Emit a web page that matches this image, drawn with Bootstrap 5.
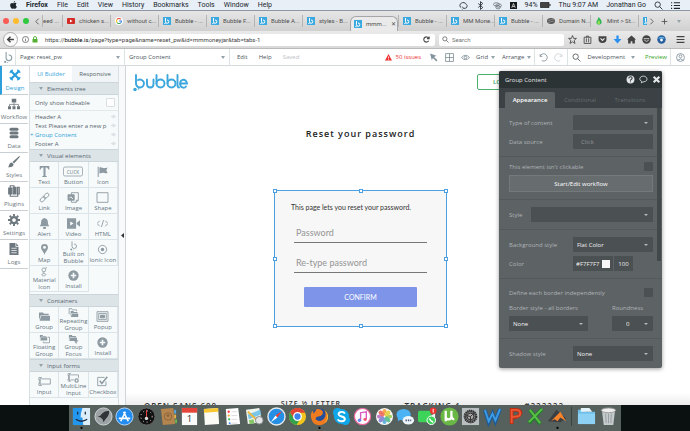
<!DOCTYPE html>
<html lang="en">
<head>
<meta charset="utf-8">
<meta name="viewport" content="width=device-width, initial-scale=1">
<title>Bubble editor</title>
<link href="https://cdn.jsdelivr.net/npm/bootstrap@5.3.0/dist/css/bootstrap.min.css" rel="stylesheet">
<style>
body{font:6px/8px "Open Sans",sans-serif;color:#56646c;background:#fff}
svg{display:block;flex:none}
button,input,select{font:inherit;color:inherit}
button{border:0;background:none;padding:0}
a{color:inherit;text-decoration:none}
.ic{width:9px;height:9px;fill:none;stroke:currentColor;stroke-width:1.5}
.mini{width:7px;height:7px}
.dim{width:5px;height:5px;color:#c0cacf}
.solid{fill:currentColor;stroke:none}
/* system menu bar */
.sysbar{height:11px;background:#e9eff7;border-bottom:1px solid #8b98a3;font:7px/10px Roboto,sans-serif;color:#20262c;padding:0 10px}
.menus{gap:9px}
/* browser chrome */
.tabstrip{height:20px;background:linear-gradient(#e6e6e6,#d0d0d0);padding:0 0 0 3px;font:6px/8px Roboto,sans-serif;color:#4e4e4e}
.light{width:6px;height:6px;border-radius:50%}
.btab{width:48px;height:12px;padding-left:4px;gap:4px;border-left:1px solid #b4b4b4;white-space:nowrap}
.btab.on{height:15px;background:#eaeaea;border:1px solid #a6a6a6;border-bottom:0;border-radius:6px 6px 0 0;align-self:flex-end;padding-left:3px;padding-right:4px}
.btab svg{width:8px;height:8px}
.urlrow{height:18px;background:linear-gradient(#eaeaea,#d9d9d9);border-bottom:1px solid #bbb;padding:0 5px 0 3px;color:#444;font-family:Roboto,sans-serif}
.back{width:15px;height:15px;border-radius:50%;background:#fbfbfb;border:1px solid #aaa;z-index:1;margin-right:-6px}
.field{height:12px;background:#fff;border-radius:2px;padding:0 5px 0 10px}
.search{width:125px;padding-left:3px}
.field input{border:0;outline:0;background:none;padding:0;min-width:0;width:100%;color:#666}
/* editor toolbar */
.apptool{height:17px;border-bottom:1px solid #d5dadd;color:#4c565c}
.cell{border-right:1px solid #dde2e4;height:100%}
.caret{width:0;height:0;border:2px solid transparent;border-top:3px solid #95a2aa;border-bottom:0}
/* side navigation */
.side{width:29px}
.side button{height:29px;width:28px;border-bottom:1px solid #c9cfd3;color:#6d777e;gap:3px}
.side svg{width:12px;height:12px}
.side .on{color:#2b9fdc;border-left:2px solid #2b9fdc}
.palette{width:90px;background:#f6fafb;border:solid #d7dfe3;border-width:0 1px}
.ptabs button{height:16px;background:#f1f5f7;padding-bottom:1px}
.ptabs .on{background:#fff;color:#39a4dc}
.sec{height:13px;background:#dde4e8;border:solid #ccd5da;border-width:1px 0;padding-left:9px;gap:4px;color:#56666f}
.hide{height:16px;padding:0 3px 0 5px;border-bottom:1px solid #e2e9ec}
.treebox{padding:1px 0}
.tree{height:9px;padding:0 2px 0 5px}
.cells{display:grid;grid-template-columns:repeat(3,1fr)}
.cells button{height:26px;border:solid #dbe4e8;border-width:0 1px 1px 0;line-height:7px;color:#65757f;padding-bottom:1px}
.cells svg{width:11px;height:11px;color:#8e9aa1;stroke-width:1.3;margin-bottom:2px}
.cells .two svg{margin-bottom:0;height:10px}
.cells .two{padding-bottom:0}
.cells .wide{width:13px}
.tick{appearance:none;width:9px;height:9px;background:#fff;border:1px solid #d8e0e4;border-radius:1px;margin:0}
.gutter{width:7px;background:#f8f9fa;border-right:1px solid #cfd5d8}
/* page being edited */
.sheet{padding-right:95px}
.login{height:16px;width:80px;border:1px solid #4db070;border-radius:2px;color:#36a05c;font-weight:600;padding-left:15px}
.ttl{font:600 9px/12px "Open Sans",sans-serif;letter-spacing:1px;color:#222;margin:35px 0 50px}
.grp{width:173px;height:137px;border:1px solid #4c9fe0;background:#f7f7f7;padding:12px 18px 0;font:7px/8px Lato,sans-serif;color:#333}
.grp p{margin:0 0 12px -4px}
.grp input{border:0;border-bottom:1px solid #777;background:none;font-size:9px;line-height:12px;height:20px;padding:0 2px;border-radius:0;width:133px;margin-bottom:10px}
.grp input::placeholder{color:#949494}
.confirm{width:113px;height:20px;background:#7d94e8;color:#fff;border-radius:1px;margin-top:4px}
.hd{width:4px;height:4px;border:1px solid #4c9fe0;background:#fff;position:absolute;transform:translate(-50%,-50%)}
.specs{font:600 8px/8px "Open Sans",sans-serif;letter-spacing:1px;color:#333;height:12px;padding:7px 0 0 18px;margin-right:-95px;padding-right:126px;white-space:nowrap;background:linear-gradient(#fff,#ececec)}
.specs span{padding-top:2px}
.specs .high{font-size:7px;padding:0}
/* property editor */
.prop{right:28px;top:5px;width:163px;background:#5d6265;border-radius:2px;box-shadow:0 1px 4px #0006;color:#aeb3b5}
.phead{height:17px;background:#2c3335;border-radius:2px 2px 0 0;color:#e3e6e7;padding:0 1px 0 6px}
.ptab{height:20px;background:#3b4144;padding-left:6px}
.ptab button{height:16px;width:50px;color:#666d70}
.ptab .on{background:#5d6265;color:#fff;font-weight:600;border-radius:2px 2px 0 0}
.prow{padding:7px 9px 7px 10px;border-bottom:1px solid #54595c;gap:4px}
.inp{height:15px;background:#4b5053;border:0;border-radius:0;padding:0 8px;color:#f1f1f1;width:80px}
.inp::placeholder{color:#8f9497}
select.inp{appearance:none;padding-left:4px;background:#4b5053 url("data:image/svg+xml,%3Csvg xmlns='http://www.w3.org/2000/svg' viewBox='0 0 4 2'%3E%3Cpath d='M0 0h4L2 2z' fill='%23b6babb'/%3E%3C/svg%3E") no-repeat right 5px center/4px 2px}
.hexbox{width:40px;background:#4b5053}
.hexbox .inp{width:29px;padding:0 0 0 3px}
.swatch{width:8px;height:8px;background:#f7f7f7}
.flow{height:17px;background:#676c6f;border:1px solid #74797b;color:#fff}
.prop .tick{background:#4b5053;border-color:#4b5053}
.thumb{right:1px;top:37px;width:4px;height:153px;background:#43484b}
/* dock */
.desk{height:26px;background:#0b1110}
.dock{width:80%;background:#56605d;padding:2px 3px 5px}
.dock svg{width:19px;height:19px;overflow:visible}
.dsep{width:1px;height:19px;background:#3b4341;margin:0 2px}
</style>
<script src="https://cdn.jsdelivr.net/npm/bootstrap@5.3.0/dist/js/bootstrap.bundle.min.js"></script>
</head>
<body class="vh-100 d-flex flex-column overflow-hidden">
<svg width="0" height="0" class="position-absolute">
<symbol id="bub" viewBox="0 0 16 16"><path d="M0 0h16v16H0z" fill="#3aa9e0"/><path d="M5 2v7a3.3 3.3 0 1 0 3-3" fill="none" stroke="#fff" stroke-width="2"/><circle cx="4" cy="13" r="1.3" fill="#fff"/></symbol>
<symbol id="bmark" viewBox="0 0 16 20"><path d="M5 1v10a4.5 4.5 0 1 0 4-5" fill="none" stroke="currentColor" stroke-width="1.8"/><circle cx="3.5" cy="17" r="1.8" fill="currentColor"/><circle cx="7.5" cy="18" r=".9" fill="currentColor"/></symbol>
<symbol id="mag" viewBox="0 0 16 16"><circle cx="6.5" cy="6.5" r="4.8"/><path d="M10 10l5 5"/></symbol>
<symbol id="eye" viewBox="0 0 16 16"><path d="M1 8q7-8 14 0q-7 8-14 0z"/><circle cx="8" cy="8" r="2.3"/></symbol>
<symbol id="plus" viewBox="0 0 16 16"><circle cx="8" cy="8" r="7.5" fill="currentColor" stroke="none"/><path d="M8 4v8M4 8h8" stroke="#f6fafb" stroke-width="2.4"/></symbol>
<symbol id="folder" viewBox="0 0 16 16"><path d="M0 2h6l1 2h7v2H2.500L0 13z" fill="currentColor" stroke="none"/><path d="M1 14L3 7h13v7z" fill="currentColor" stroke="none"/></symbol>
</svg>

<header>
<div class="sysbar d-flex align-items-center justify-content-between">
 <nav class="menus d-flex align-items-center">
  <svg class="solid" width="7" height="8" viewBox="0 0 14 16"><path d="M10 0c0 2-1.500 3.500-3 3.500C7 2 8 .5 10 0zM7.300 4.500C8 4.500 9 3.700 10.300 3.700c1 0 2.200.6 2.900 1.500-2.500 1.600-2 5 .5 6-.6 1.700-2 4.300-3.500 4.300-1 0-1.400-.7-2.700-.7s-1.700.7-2.700.7C2.500 15.500.300 11.500.300 8.500c0-3 1.900-4.700 3.800-4.700 1.300 0 2.300.7 3.200.7z"/></svg>
  <a href="#" class="fw-bold">Firefox</a><a href="#">File</a><a href="#">Edit</a><a href="#">View</a><a href="#">History</a><a href="#">Bookmarks</a><a href="#">Tools</a><a href="#">Window</a><a href="#">Help</a>
 </nav>
 <div class="d-flex align-items-center gap-2">
  <svg class="ic" viewBox="0 0 16 16"><path d="M4 12a4.500 4.500 0 0 1 0-8 6 6 0 0 1 9 2 4 4 0 0 1-2 7H9M6 10l2 3-2 2"/></svg>
  <svg class="ic" viewBox="0 0 16 16"><path d="M4 4.500l8 7L8 15V1l4 3.500-8 7"/></svg>
  <svg class="ic" viewBox="0 0 16 16" opacity=".6"><ellipse cx="6" cy="6" rx="5" ry="3"/><ellipse cx="10" cy="8" rx="5" ry="3"/><ellipse cx="9" cy="11" rx="4" ry="3"/></svg>
  <svg width="7" height="7" viewBox="0 0 14 14"><path d="M0 0h14v14H0z" fill="#16191c"/><path d="M3.500 11.500L7 3l3.500 8.500M5 9h4" fill="none" stroke="#fff" stroke-width="1.400"/></svg>
  <div class="d-flex align-items-center" style="gap:2px">94%<svg width="11" height="6" viewBox="0 0 22 12"><path d="M1 1h17v10H1z" fill="#444" stroke="#222" stroke-width="1.500"/><path d="M20 4v4" stroke="#222" stroke-width="2"/></svg></div>
  <span>Thu 9:07 AM</span><span>Jonathan Go</span>
  <svg class="ic" viewBox="0 0 16 16"><use href="#mag"/></svg>
  <svg class="ic" viewBox="0 0 16 16"><path d="M5 3h11M5 8h11M5 13h11M0 3h2M0 8h2M0 13h2" stroke-width="2"/></svg>
 </div>
</div>

<div class="tabstrip d-flex align-items-center overflow-hidden">
 <div class="d-flex" style="gap:4px"><span class="light" style="background:#f95c54"></span><span class="light" style="background:#fdbc30"></span><span class="light" style="background:#30c83f"></span></div>
 <svg class="ic ms-1 flex-shrink-0" viewBox="0 0 16 16"><path d="M10 3L5 8l5 5"/></svg>
 <div class="d-flex flex-grow-1 overflow-hidden h-100 align-items-center">
  <div class="btab d-flex align-items-center flex-shrink-0 ps-0" style="width:20px">eed ...</div>
  <div class="btab d-flex align-items-center flex-shrink-0"><svg viewBox="0 0 16 16"><rect y="2" width="16" height="12" rx="2" fill="#d32b26"/><path d="M6 5v6l5-3z" fill="#fff"/></svg>chicken s...</div>
  <div class="btab d-flex align-items-center flex-shrink-0"><svg viewBox="0 0 16 16"><circle cx="8" cy="8" r="8" fill="#fff"/><g fill="none" stroke-width="2.200"><path d="M11.500 4.500A5 5 0 0 0 4 5" stroke="#e94335"/><path d="M4 5a5 5 0 0 0 0 6" stroke="#fbbc05"/><path d="M4 11a5 5 0 0 0 7 1" stroke="#34a853"/><path d="M11 12a5 5 0 0 0 2-4H8" stroke="#4285f4"/></g></svg>without c...</div>
  <div class="btab d-flex align-items-center flex-shrink-0"><svg><use href="#bub"/></svg>Bubble - ...</div>
  <div class="btab d-flex align-items-center flex-shrink-0"><svg><use href="#bub"/></svg>Bubble F...</div>
  <div class="btab d-flex align-items-center flex-shrink-0"><svg><use href="#bub"/></svg>Bubble A...</div>
  <div class="btab d-flex align-items-center flex-shrink-0"><svg><use href="#bub"/></svg>styles - B...</div>
  <div class="btab on d-flex align-items-center flex-shrink-0"><svg><use href="#bub"/></svg>mmm...<button class="ms-auto" aria-label="Close tab">✕</button></div>
  <div class="btab d-flex align-items-center flex-shrink-0"><svg><use href="#bub"/></svg>Bubble - ...</div>
  <div class="btab d-flex align-items-center flex-shrink-0"><svg><use href="#bub"/></svg>MM Mone...</div>
  <div class="btab d-flex align-items-center flex-shrink-0"><svg><use href="#bub"/></svg>Bubble - ...</div>
  <div class="btab d-flex align-items-center flex-shrink-0"><svg viewBox="0 0 16 16"><ellipse cx="8" cy="8" rx="8" ry="6" fill="#555"/><path d="M2 7l12-3M2 11l12-3" stroke="#bbb"/></svg>Domain N...</div>
  <div class="btab d-flex align-items-center flex-shrink-0"><svg viewBox="0 0 16 16"><path d="M7 0c6 6 7 9 6 12-2 4-9 4-10 0C2 8 6 6 7 0z" fill="#2fb457"/><path d="M8 6c-5 5-4 8 0 9 3-2 3-5 0-9z" fill="#8fe04f"/></svg>Mint &gt; St...</div>
  <div class="btab d-flex align-items-center flex-shrink-0"><svg><use href="#bub"/></svg></div>
 </div>
 <div class="d-flex align-items-center flex-shrink-0" style="gap:4px;width:43px">
  <svg class="ic" viewBox="0 0 16 16"><path d="M6 3l5 5-5 5"/></svg><svg class="ic" viewBox="0 0 16 16"><path d="M8 3v10M3 8h10"/></svg><span class="caret ms-1"></span>
 </div>
</div>

<div class="urlrow d-flex align-items-center">
 <button class="back d-flex align-items-center justify-content-center flex-shrink-0" aria-label="Back"><svg class="ic" viewBox="0 0 16 16"><path d="M14 8H3M8 3L3 8l5 5" stroke-width="2.600"/></svg></button>
 <div class="field d-flex align-items-center flex-grow-1" style="gap:3px">
  <svg class="ic mini" viewBox="0 0 16 16"><circle cx="8" cy="8" r="7"/><path d="M8 7v5M8 4v1.500"/></svg>
  <svg width="6" height="7" viewBox="0 0 12 14"><path d="M1 6h10v7H1z" fill="#53b033"/><path d="M3 6V4a3 3 0 0 1 6 0v2" fill="none" stroke="#53b033" stroke-width="1.800"/></svg>
  <div class="ps-1 flex-grow-1 text-nowrap">https://<span class="text-black">bubble.is</span>/page?type=page&amp;name=reset_pw&amp;id=mmmoneyjar&amp;tab=tabs-1</div>
  <svg class="ic mini" viewBox="0 0 16 16"><path d="M13 11a6 6 0 1 1 0-6M14 1v5H9" stroke-width="2.500"/></svg>
 </div>
 <label class="field search d-flex align-items-center ms-1 flex-shrink-0" style="gap:3px"><svg class="ic mini" viewBox="0 0 16 16"><use href="#mag"/></svg><input aria-label="Search" placeholder="Search"></label>
 <div class="d-flex align-items-center justify-content-between flex-shrink-0" style="width:121px;padding-left:4px">
  <svg class="ic" viewBox="0 0 16 16"><path d="M8 1l2 5h5l-4 3.500 1.500 5.500L8 12l-4.500 3L5 9.500 1 6h5z"/></svg>
  <svg class="ic" viewBox="0 0 16 16"><path d="M2 4h12v11H2zM6 4V2h4v2M6 6v7M10 6v7"/></svg>
  <svg class="ic solid" viewBox="0 0 16 16"><path d="M1 2h14v6a7 6 0 0 1-14 0z"/><path d="M4.500 6L8 9.500 11.500 6" fill="none" stroke="#eee" stroke-width="2"/></svg>
  <svg class="ic solid" viewBox="0 0 16 16" color="#2b90ef"><path d="M6 1h4v6h5l-7 8-7-8h5z"/></svg>
  <svg class="ic solid" viewBox="0 0 16 16"><path d="M8 1l8 7h-2v7H9.500v-4h-3v4H2V8H0z"/></svg>
  <svg class="ic solid" viewBox="0 0 16 16"><circle cx="8" cy="8" r="7.500"/><path d="M3 6.500h10M4 9q4 5 8 0" fill="none" stroke="#ddd" stroke-width="1.500"/></svg>
  <svg class="ic solid" viewBox="0 0 16 16"><circle cx="8" cy="8" r="7.500" fill="#285f9d"/><path d="M2 6a7 5 0 0 1 12 0z" fill="#6fc3ef"/><circle cx="8" cy="9" r="2.500" fill="#fff"/></svg>
  <svg class="ic ms-1" viewBox="0 0 16 16"><path d="M1 3h14M1 8h14M1 13h14" stroke-width="2.200"/></svg>
 </div>
</div>

<div class="apptool d-flex align-items-center">
 <div class="cell d-flex align-items-center justify-content-center" style="width:16px"><svg width="10" height="13" color="#8fa0a9"><use href="#bmark"/></svg></div>
 <button class="cell d-flex align-items-center justify-content-between" style="width:109px;padding:0 4px">Page: reset_pw<span class="caret"></span></button>
 <button class="cell d-flex align-items-center justify-content-between" style="width:105px;padding:0 4px">Group Content<span class="caret"></span></button>
 <div class="d-flex me-auto" style="gap:11px;padding-left:7px"><a href="#">Edit</a><a href="#">Help</a><span style="color:#b9bfc3">Saved</span></div>
 <div class="d-flex align-items-center me-2" style="color:#ee3130;gap:3px"><svg class="solid" width="7" height="7" viewBox="0 0 14 14"><path d="M7 0l7 13H0z"/><path d="M7 5v4M7 10v1.500" stroke="#fff" stroke-width="1.500"/></svg>50 issues</div>
 <div class="d-flex align-items-center" style="color:#82919a;gap:7px">
  <svg class="ic solid" viewBox="0 0 16 16"><path d="M2 1l11 4-4 2 6 6-2 2-6-6-2 4z"/></svg>
  <svg class="ic" viewBox="0 0 16 16"><path d="M1 1h14v14H1zM8 1v14M1 8h14"/></svg>
  <svg class="ic" viewBox="0 0 16 16"><use href="#eye"/></svg>
 </div>
 <div class="cell d-flex align-items-center" style="gap:3px;padding:0 3px 0 6px"><span>Grid</span><span class="caret"></span><span class="ms-1">Arrange</span><span class="caret"></span></div>
 <div class="cell d-flex align-items-center" style="gap:6px;padding:0 4px;color:#82919a"><svg class="ic" viewBox="0 0 16 16"><path d="M2 2v4h4M2 6a6.500 6.500 0 1 1 3 7.500"/></svg><svg class="ic" opacity=".4" viewBox="0 0 16 16"><path d="M14 2v4h-4M14 6a6.500 6.500 0 1 0-3 7.500"/></svg></div>
 <div class="d-flex align-items-center" style="padding-left:4px;gap:6px"><svg class="ic" viewBox="0 0 16 16"><use href="#mag"/></svg><span>Development</span><span class="caret"></span></div>
 <a href="#" class="cell d-flex align-items-center" style="color:#38a525;padding:0 3px 0 10px">Preview</a>
 <svg class="ic" style="margin:0 5px;color:#82919a" viewBox="0 0 16 16"><circle cx="8" cy="8" r="7"/><circle cx="8" cy="6" r="2.500"/><path d="M3 13q5-5 10 0"/></svg>
</div>
</header>

<main class="d-flex flex-grow-1 overflow-hidden position-relative">
<nav class="side d-flex flex-column flex-shrink-0">
 <button class="on d-flex flex-column align-items-center justify-content-center"><svg class="ic" viewBox="0 0 16 16"><path d="M2 2l12 12M14 2L2 14" stroke-width="3"/><path d="M1 5l4-4M11 15l4-4M11 1l4 4M1 11l4 4" stroke-width="1.500"/></svg>Design</button>
 <button class="d-flex flex-column align-items-center justify-content-center"><svg class="ic" viewBox="0 0 16 16"><path d="M5 1h6v5H5zM0 11h4v4H0zM6 11h4v4H6zM12 11h4v4h-4z" fill="currentColor" stroke="none"/><path d="M8 6v5M2 11V8.500h12V11" stroke-width="1"/></svg>Workflow</button>
 <button class="d-flex flex-column align-items-center justify-content-center"><svg class="solid" viewBox="0 0 16 16"><rect x="2" y="1" width="12" height="4" rx="2"/><rect x="2" y="6" width="12" height="4" rx="2"/><rect x="2" y="11" width="12" height="4" rx="2"/></svg>Data</button>
 <button class="d-flex flex-column align-items-center justify-content-center"><svg class="solid" viewBox="0 0 16 16"><path d="M15 0l1 1-8 9-2-2zM5 8.500L7.500 11C7 15 3 15 0 15c2-2 1-6 5-6.500z"/></svg>Styles</button>
 <button class="d-flex flex-column align-items-center justify-content-center"><svg class="ic" viewBox="0 0 16 16"><path d="M1 4h4v8H1zM7 3h3v9H7z" fill="currentColor"/><path d="M3 4V1h5v2M3 12v3h10V3M12 3h3v9h-3z"/></svg>Plugins</button>
 <button class="d-flex flex-column align-items-center justify-content-center"><svg class="ic" viewBox="0 0 16 16"><circle cx="8" cy="8" r="4" stroke-width="3"/><path d="M8 0v3M8 13v3M0 8h3M13 8h3M2.300 2.300l2 2M11.700 11.700l2 2M2.300 13.700l2-2M11.700 4.300l2-2" stroke-width="2.500"/></svg>Settings</button>
 <button class="d-flex flex-column align-items-center justify-content-center"><svg class="solid" viewBox="0 0 16 16"><path d="M2 0h8v5h4v11H2zM11 0l3 4h-3z"/><path d="M4.500 7h7M4.500 10h7M4.500 13h7" stroke="#fff"/></svg>Logs</button>
</nav>

<aside class="palette flex-shrink-0 overflow-hidden">
 <div class="ptabs d-flex"><button class="on flex-fill">UI Builder</button><button class="flex-fill">Responsive</button></div>
 <div class="sec d-flex align-items-center"><span class="caret"></span>Elements tree</div>
 <label class="hide d-flex align-items-center justify-content-between">Only show hideable<input type="checkbox" class="tick"></label>
 <div class="treebox">
  <div class="tree d-flex align-items-center justify-content-between">Header A<svg class="ic dim" viewBox="0 0 16 16"><use href="#eye"/></svg></div>
  <div class="tree d-flex align-items-center justify-content-between text-nowrap">Text Please enter a new p<svg class="ic dim" viewBox="0 0 16 16"><use href="#eye"/></svg></div>
  <div class="tree d-flex align-items-center justify-content-between ps-0" style="color:#2f9fd9"><span>+ Group Content</span><svg class="ic dim" viewBox="0 0 16 16"><use href="#eye"/></svg></div>
  <div class="tree d-flex align-items-center justify-content-between">Footer A<svg class="ic dim" viewBox="0 0 16 16"><use href="#eye"/></svg></div>
 </div>
 <div class="sec d-flex align-items-center"><span class="caret"></span>Visual elements</div>
 <div class="cells" style="padding-bottom:2px">
  <button class="d-flex flex-column align-items-center justify-content-end"><svg class="solid" viewBox="0 0 16 16"><path d="M1 0h14v5h-1.500C13 2.500 12 2 9.500 2v11c0 1.500.5 2 2 2v1h-7v-1c1.500 0 2-.5 2-2V2C4 2 3 2.500 2.500 5H1z"/></svg>Text</button>
  <button class="d-flex flex-column align-items-center justify-content-end"><svg style="width:20px" viewBox="0 0 40 22"><rect x="1" y="2" width="38" height="18" rx="3" fill="none" stroke="currentColor" stroke-width="1.500"/><text x="20" y="15" font-size="9" font-weight="600" text-anchor="middle" fill="currentColor">CLICK</text></svg>Button</button>
  <button class="d-flex flex-column align-items-center justify-content-end"><svg class="solid" viewBox="0 0 16 16"><path d="M1 1h1.500v15H1zM3.500 2c4-1 5 2 8 1 1 0 2-.5 4-1l-2 4 2 4c-4 2-5-1-8 0-2 0-3 1-4 1z"/></svg>Icon</button>
  <button class="d-flex flex-column align-items-center justify-content-end"><svg class="ic" viewBox="0 0 16 16"><g transform="rotate(-45 8 8)"><rect x="0" y="5.500" width="9" height="5" rx="2.500"/><rect x="7" y="5.500" width="9" height="5" rx="2.500"/></g></svg>Link</button>
  <button class="d-flex flex-column align-items-center justify-content-end"><svg class="ic wide" viewBox="0 0 16 16"><path d="M5 4V1h10v11l-3 3H5v-3M12 15v-3h3"/><path d="M0 4h9v8H0z" fill="currentColor"/><path d="M2 9l2-2 3 3" stroke="#fff"/></svg>Image</button>
  <button class="d-flex flex-column align-items-center justify-content-end"><svg class="ic wide" viewBox="0 0 18 16"><path d="M1 1h16v14H1z"/></svg>Shape</button>
  <button class="d-flex flex-column align-items-center justify-content-end"><svg class="solid" viewBox="0 0 16 16"><path d="M8 0c4 1 5 3 5 7 0 2 .5 3 2 5H1c1.500-2 2-3 2-5 0-4 1-6 5-7zM6 13h4a2 2 0 0 1-4 2z"/></svg>Alert</button>
  <button class="d-flex flex-column align-items-center justify-content-end"><svg class="solid wide" viewBox="0 0 20 16"><path d="M0 0h14v16H0zM15 7l5-4v10l-5-4z"/><path d="M5 5v6l5-3z" fill="#fff"/></svg>Video</button>
  <button class="d-flex flex-column align-items-center justify-content-end"><svg class="ic" viewBox="0 0 16 16"><path d="M4 4L0 8l4 4M12 4l4 4-4 4M9.500 3l-3 10"/></svg>HTML</button>
  <button class="d-flex flex-column align-items-center justify-content-end"><svg class="solid" viewBox="0 0 16 16"><path d="M8 0a5 5 0 0 1 5 5c0 4-4 6-5 11C7 11 3 9 3 5a5 5 0 0 1 5-5z"/><circle cx="8" cy="5" r="2" fill="#fff"/></svg>Map</button>
  <button class="two d-flex flex-column align-items-center justify-content-end"><svg><use href="#bmark"/></svg>Built on<br>Bubble</button>
  <button class="d-flex flex-column align-items-center justify-content-end text-nowrap"><svg class="ic" viewBox="0 0 16 16"><circle cx="8" cy="8" r="6"/><circle cx="8" cy="8" r="2.500" fill="currentColor" stroke="none"/></svg>Ionic Icon</button>
  <button class="two d-flex flex-column align-items-center justify-content-end"><svg class="ic" viewBox="0 0 16 16"><circle cx="7" cy="4.500" r="3"/><path d="M9 2l3-1M6 7.500c-3 2 5 2 4 5s-8 2-6-1c1-1 3-1 4-1"/></svg>Material<br>Icon</button>
  <button class="d-flex flex-column align-items-center justify-content-end"><svg><use href="#plus"/></svg>Install</button>
 </div>
 <div class="sec d-flex align-items-center"><span class="caret"></span>Containers</div>
 <div class="cells">
  <button class="d-flex flex-column align-items-center justify-content-end"><svg class="wide"><use href="#folder"/></svg>Group</button>
  <button class="two d-flex flex-column align-items-center justify-content-end"><svg class="ic" viewBox="0 0 16 16"><path d="M1 10V1h4l1 2h7v2"/><use href="#folder" x="3" y="3" width="13" height="13"/></svg>Repeating<br>Group</button>
  <button class="d-flex flex-column align-items-center justify-content-end"><svg class="ic wide" viewBox="0 0 18 16"><path d="M1 1h16v14H1zM3.500 3.500h11v9h-11z"/><path d="M6 6h6v4H6z" fill="currentColor"/></svg>Popup</button>
  <button class="two d-flex flex-column align-items-center justify-content-end"><svg class="ic" viewBox="0 0 16 16"><use href="#folder" width="13" height="12"/><path d="M13 5h3v9H6v-2"/></svg>Floating<br>Group</button>
  <button class="two d-flex flex-column align-items-center justify-content-end"><svg class="ic" viewBox="0 0 16 16"><use href="#folder" width="14" height="13"/><path d="M8 8l6 3-3 1 2 3" stroke-width="2"/></svg>Group<br>Focus</button>
  <button class="d-flex flex-column align-items-center justify-content-end"><svg><use href="#plus"/></svg>Install</button>
 </div>
 <div class="sec d-flex align-items-center"><span class="caret"></span>Input forms</div>
 <div class="cells">
  <button class="d-flex flex-column align-items-center justify-content-end"><svg class="ic wide" viewBox="0 0 20 16"><path d="M5 4h14v8H5M0 4h2v8H0M1 2h5M3.500 2v12M1 14h5"/></svg>Input</button>
  <button class="two d-flex flex-column align-items-center justify-content-end"><svg class="ic wide" viewBox="0 0 20 16"><path d="M5 3h13v5M5 11h6M0 3h2v8H0M1 1h5M3.500 1v12M1 13h5"/><circle cx="15" cy="12" r="2.500" stroke-width="2"/></svg>MultiLine<br>Input</button>
  <button class="d-flex flex-column align-items-center justify-content-end"><svg class="ic" viewBox="0 0 16 16"><path d="M13 8v6H1V2h10"/><path d="M4 7l3 4 8-10" stroke-width="2.200"/></svg>Checkbox</button>
 </div>
</aside>
<div class="gutter d-flex align-items-center justify-content-center flex-shrink-0"><svg class="solid" width="3" height="5" viewBox="0 0 3 5"><path d="M3 0v5L0 2.500z" fill="#333"/></svg></div>

<section class="sheet flex-grow-1 d-flex flex-column">
 <div class="d-flex justify-content-between" style="padding:8px 38px 0 7px">
  <svg width="55" height="19" viewBox="0 0 110 38" fill="none" stroke="#3ba7dd" stroke-width="3.800" stroke-linecap="round"><path d="M6 2v16a8 8 0 1 0 4-6"/><path d="M28 11v9q0 7 6.500 7T41 20v-9M47 2v17M69 2v17M89 2v20q0 5 3 5M96 19h12a7 8 0 1 0-2 6"/><circle cx="55" cy="19" r="8"/><circle cx="77" cy="19" r="8"/><circle cx="4" cy="31" r="3.500" fill="#3ba7dd" stroke="none"/><circle cx="11" cy="30" r="1.500" fill="#3ba7dd" stroke="none"/></svg>
  <button class="login text-start">LOG IN</button>
 </div>
 <h1 class="ttl text-center">Reset your password</h1>
 <form class="grp position-relative mx-auto d-flex flex-column align-items-center">
  <i class="hd top-0 start-0"></i><i class="hd top-0 start-50"></i><i class="hd top-0 start-100"></i><i class="hd top-50 start-0"></i><i class="hd top-50 start-100"></i><i class="hd top-100 start-0"></i><i class="hd top-100 start-50"></i><i class="hd top-100 start-100"></i>
  <p class="text-nowrap w-100">This page lets you reset your password.</p>
  <input type="password" placeholder="Password" aria-label="Password">
  <input type="password" placeholder="Re-type password" aria-label="Re-type password">
  <button type="button" class="confirm">CONFIRM</button>
 </form>
 <div class="specs mt-auto d-flex justify-content-between overflow-hidden align-items-start"><span>OPEN SANS 600</span><span class="high">SIZE ½ LETTER</span><span>TRACKING 1</span><span>#222222</span></div>
</section>

<section class="prop position-absolute">
 <div class="phead d-flex align-items-center justify-content-between"><span>Group Content</span>
  <div class="d-flex align-items-center gap-1"><svg class="ic solid" viewBox="0 0 16 16"><circle cx="8" cy="8" r="7"/><path d="M5 6q0-3 3-3t3 2.500Q11 7 8 9v1M8 11.500V13" fill="none" stroke="#2c3335" stroke-width="1.800"/></svg><svg class="ic" viewBox="0 0 16 16"><path d="M4 14l1-2.500C-1 9 1 2 8 2s9 9 1 10q-2 0-5 2z"/></svg><svg class="ic" viewBox="0 0 16 16"><path d="M3 3l10 10M13 3L3 13" stroke-width="4"/></svg></div></div>
 <div class="ptab d-flex align-items-end"><button class="on">Appearance</button><button>Conditional</button><button>Transitions</button></div>
 <div class="prow d-flex flex-column">
  <label class="d-flex align-items-center justify-content-between">Type of content<select class="inp"><option></option></select></label>
  <label class="d-flex align-items-center justify-content-between">Data source<input class="inp" placeholder="Click"></label>
 </div>
 <div class="prow d-flex flex-column" style="padding-top:5px">
  <label class="d-flex align-items-center justify-content-between">This element isn't clickable<input type="checkbox" class="tick"></label>
  <button class="flow w-100">Start/Edit workflow</button>
 </div>
 <div class="prow"><label class="d-flex align-items-center justify-content-between">Style<select class="inp" style="width:122px"><option></option></select></label></div>
 <div class="prow d-flex flex-column">
  <label class="d-flex align-items-center justify-content-between">Background style<select class="inp"><option>Flat Color</option></select></label>
  <div class="d-flex align-items-center"><label for="hex" class="me-auto">Color</label>
   <div class="hexbox d-flex align-items-center"><input id="hex" class="inp flex-shrink-0" value="#F7F7F7"><span class="swatch flex-shrink-0"></span></div>
   <input class="inp text-center" aria-label="Opacity" style="width:19px;padding:0;margin:0 20px 0 1px" value="100"></div>
 </div>
 <div class="prow d-flex flex-column" style="padding-top:9px">
  <label class="d-flex align-items-center justify-content-between" style="margin-bottom:3px">Define each border independently<input type="checkbox" class="tick"></label>
  <div class="d-flex justify-content-between">
   <label>Border style - all borders<select class="inp d-block mt-1" style="width:79px"><option>None</option></select></label>
   <label style="width:41px">Roundness<select class="inp d-block mt-1 w-100" style="padding-left:14px"><option>0</option></select></label>
  </div>
 </div>
 <div class="prow border-0"><label class="d-flex align-items-center justify-content-between">Shadow style<select class="inp"><option>None</option></select></label></div>
 <span class="thumb position-absolute"></span>
</section>
</main>

<footer class="desk d-flex justify-content-center flex-shrink-0">
<div class="dock d-flex align-items-center justify-content-between">
 <svg viewBox="0 0 20 20"><path d="M1 1h18v18H1z" fill="#dceefa"/><path d="M1 1h10q-2 5-2 10h2q0 4 1 8H1z" fill="#2396ee"/><path d="M6 5v3M14 5v3M4 13q6 4 12 0" fill="none" stroke="#1a2b45" stroke-width="1.300"/><circle cx="10" cy="22" r="1.200" fill="#000"/></svg>
 <svg viewBox="0 0 20 20"><circle cx="10" cy="10" r="9" fill="#9da2a5" stroke="#d5d8da"/><path d="M16 4c-5 0-8 3-9 5l-3 1 3 1 2 2 1 3 2-3c2-2 4-4 4-9z" fill="#303437"/></svg>
 <svg viewBox="0 0 20 20"><circle cx="10" cy="10" r="9" fill="#228cf0" stroke="#bcdcf8"/><path d="M6 15l5-10M9 5l5 10M4 12h12" stroke="#fff" stroke-width="1.700"/></svg>
 <svg viewBox="0 0 20 20"><circle cx="10" cy="10" r="9" fill="#111" stroke="#666"/><circle cx="10" cy="10" r="6" fill="none" stroke="#ddd" stroke-dasharray="1 3"/><path d="M10 11V3" stroke="#e44"/><circle cx="10" cy="12" r="1.800" fill="#ddd"/></svg>
 <svg viewBox="0 0 20 20"><path d="M2 2l13-1 2 17-13 1z" fill="#b5854f"/><path d="M16 3h2v4h-2z" fill="#5ba7dd"/><path d="M16 8h2v4h-2z" fill="#e7b443"/><path d="M17 13h2v4h-2z" fill="#6bb350"/><circle cx="9.500" cy="10" r="4" fill="none" stroke="#8d6337"/><circle cx="9.500" cy="9" r="1.500" fill="#8d6337"/></svg>
 <svg viewBox="0 0 20 20"><path d="M2 1h16v18H2z" fill="#fafafa"/><path d="M2 1h16v5H2z" fill="#e5443b"/><text x="10" y="16" font-size="10" fill="#333" text-anchor="middle">1</text></svg>
 <svg viewBox="0 0 20 20"><path d="M2 2l15-1 1 17-15 1z" fill="#fcfcf6"/><path d="M2 2l15-1v4L2 6z" fill="#f8c832"/></svg>
 <svg viewBox="0 0 20 20"><path d="M3 2l13-1 2 17-14 1z" fill="#fff"/><circle cx="6" cy="5" r="1.200" fill="#f34"/><circle cx="6" cy="9" r="1.200" fill="#fa3"/><circle cx="6.500" cy="13" r="1.200" fill="#3b5"/><circle cx="7" cy="17" r="1" fill="#38f"/><path d="M9 5h6M9 9h6M9 13h6M9 17h6" stroke="#ccc" stroke-width=".7"/></svg>
 <svg viewBox="0 0 20 20"><path d="M1 3l14-2 3 15-15 2z" fill="#eef3ec"/><path d="M3 8l13-5 1 5-13 5z" fill="#7ac5ea"/><path d="M3 5l12 11" stroke="#efb93c" stroke-width="2"/><path d="M4 14l5-1 1 4-5 1z" fill="#85c665"/><circle cx="15" cy="14" r="4" fill="#e3e5e6" stroke="#888"/></svg>
 <svg viewBox="0 0 20 20"><circle cx="10" cy="10" r="9" fill="#258ee5" stroke="#e5e9eb" stroke-width="1.500"/><path d="M16 4l-5 7-2-2z" fill="#ee3f36"/><path d="M4 16l5-7 2 2z" fill="#fff"/></svg>
 <svg viewBox="0 0 20 20"><circle cx="10" cy="10" r="9" fill="#f4c51c"/><path d="M2.200 5.500A9 9 0 0 1 18 6h-8L6 12z" fill="#df4434"/><path d="M2.200 5.500A9 9 0 0 0 9 19l4-7H6z" fill="#34a24b"/><circle cx="10" cy="10" r="4" fill="#3f82ea" stroke="#fff" stroke-width="1.400"/></svg>
 <svg viewBox="0 0 20 20"><circle cx="10" cy="10" r="8.500" fill="#224f9b"/><path d="M7 2c5 0 8 2 6 6-2 3-7 1-7 5 3 3 8 2 10-3 1-3 0-5-1-7 5 4 5 10 2 13-5 5-13 4-15-2C0 9 1 6 3 4l1 3z" fill="#ef7b20"/><path d="M16 4c3 5 3 9-1 13 4-2 6-8 1-13z" fill="#fac338"/><circle cx="10" cy="22" r="1.200" fill="#000"/></svg>
 <svg viewBox="0 0 20 20"><circle cx="10" cy="10" r="8" fill="#10a7e8"/><circle cx="6" cy="6" r="5" fill="#10a7e8"/><circle cx="14" cy="14" r="5" fill="#10a7e8"/><path d="M13.500 7C12 4 6.500 5 7 8c.5 2.500 6.500 1.500 6.500 4.500 0 3-6 3.500-7.500.5" fill="none" stroke="#fff" stroke-width="2"/></svg>
 <svg viewBox="0 0 20 20"><circle cx="10" cy="10" r="8.500" fill="#fff" stroke="#e96aa1" stroke-width="1.300"/><path d="M8 14V6l6-1v8" fill="none" stroke="#d855c2" stroke-width="1.400"/><circle cx="6.800" cy="14" r="1.800" fill="#6589ee"/><circle cx="12.800" cy="13" r="1.800" fill="#f05a72"/></svg>
 <svg viewBox="0 0 20 20"><circle cx="10" cy="10" r="9" fill="#fafafa"/><g opacity=".85"><ellipse cx="10" cy="5.500" rx="2.200" ry="3.500" fill="#f79a2f"/><ellipse cx="10" cy="14.500" rx="2.200" ry="3.500" fill="#4aa8d8"/><ellipse cx="5.500" cy="10" rx="3.500" ry="2.200" fill="#b96bc0"/><ellipse cx="14.500" cy="10" rx="3.500" ry="2.200" fill="#94c94a"/><g transform="rotate(45 10 10)"><ellipse cx="10" cy="5.500" rx="2.200" ry="3.500" fill="#e2cd35"/><ellipse cx="10" cy="14.500" rx="2.200" ry="3.500" fill="#7a7bd0"/><ellipse cx="5.500" cy="10" rx="3.500" ry="2.200" fill="#ee5e50"/><ellipse cx="14.500" cy="10" rx="3.500" ry="2.200" fill="#4db885"/></g></g></svg>
 <svg viewBox="0 0 20 20"><ellipse cx="8" cy="8" rx="7.500" ry="6" fill="#4bb2f3"/><path d="M2 10v5l5-3z" fill="#4bb2f3"/><ellipse cx="13" cy="14" rx="6" ry="4.500" fill="#eef6fb"/><path d="M10 14h6" stroke="#457" stroke-width="1.800" stroke-dasharray="1.500 1"/></svg>
 <svg viewBox="0 0 20 20"><rect y="4" width="14" height="12" rx="2" fill="#3dd45a"/><path d="M14 9l4-3v8l-4-2z" fill="#eee"/><circle cx="14" cy="14" r="4.500" fill="#3dd45a" stroke="#fff"/><path d="M12 12q1 3 4 4" stroke="#fff" stroke-width="1.500" fill="none"/><circle cx="16" cy="4" r="3.500" fill="#ed332f"/><path d="M16 2v4" stroke="#fff"/></svg>
 <svg viewBox="0 0 20 20"><circle cx="10" cy="10" r="9.500" fill="#69b845"/><path d="M6 4v11M6 4v6q0 3 3 3t3-3V4M12 9q0 4 3 4" fill="none" stroke="#fff" stroke-width="2.400"/></svg>
 <svg viewBox="0 0 20 20"><path d="M1 1h18v18H1z" fill="#b9bec1"/><circle cx="10" cy="10" r="6" fill="#777" stroke="#333" stroke-width="2.400" stroke-dasharray="1.500 .5"/><circle cx="10" cy="10" r="3.500" fill="#aaa" stroke="#333"/><path d="M10 10l4-4M10 10v5M10 10L5 9" stroke="#333"/></svg>
 <svg viewBox="0 0 20 20"><path d="M2 3l4 13 4-9 3 8 5-13" fill="none" stroke="#1d5b9a" stroke-width="4"/><path d="M2 3l4 12 4-8 3 7 5-12" fill="none" stroke="#3d9ce4" stroke-width="2"/></svg>
 <svg viewBox="0 0 20 20"><path d="M7 18V3h5q5 0 4 4t-9 4" fill="none" stroke="#b92f13" stroke-width="4"/><path d="M7 17V3h5q4 0 4 4t-9 3" fill="none" stroke="#ee5632" stroke-width="2"/></svg>
 <svg viewBox="0 0 20 20"><path d="M4 3l11 15M17 2L3 17" stroke="#257d2c" stroke-width="4"/><path d="M4 3l11 14M17 2L3 16" stroke="#5ac148" stroke-width="2"/></svg>
 <svg viewBox="0 0 20 20"><path d="M0 15L9 3l10 9-6 4z" fill="#3b3e42"/><path d="M3 15l10-10 6 10-6-4-3 4-3-2z" fill="#f5842c"/><circle cx="10" cy="22" r="1.200" fill="#000"/></svg>
 <span class="dsep"></span>
 <svg viewBox="0 0 20 20"><path d="M1 3h7l1 2h10v13H1z" fill="#6fc0ea"/><path d="M4 1h9l3 4H4z" fill="#e5f3fa"/><path d="M1 7h18v11H1z" fill="#8dd2f4"/></svg>
 <svg viewBox="0 0 20 20"><path d="M3 3h14l-2 16H5z" fill="#c5cacd"/><ellipse cx="10" cy="3.500" rx="7.500" ry="2.500" fill="#eee" stroke="#999"/><path d="M7 7l.5 10M10 7v10M13 7l-.5 10" stroke="#969b9e"/></svg>
</div>
</footer>
</body>
</html>
